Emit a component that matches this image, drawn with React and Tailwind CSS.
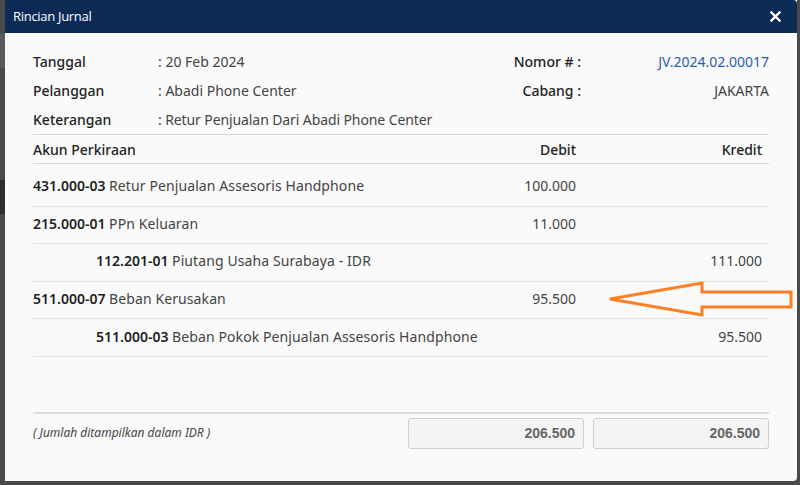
import React from "react";

const rows = [
  { code: "431.000-03", name: "Retur Penjualan Assesoris Handphone", debit: "100.000", kredit: "", indent: false, h: "h-[43px]" },
  { code: "215.000-01", name: "PPn Keluaran", debit: "11.000", kredit: "", indent: false, h: "h-[37px] pb-[4px]" },
  { code: "112.201-01", name: "Piutang Usaha Surabaya - IDR", debit: "", kredit: "111.000", indent: true, h: "h-[38px] pb-[4px]" },
  { code: "511.000-07", name: "Beban Kerusakan", debit: "95.500", kredit: "", indent: false, h: "h-[37px] pb-[4px]" },
  { code: "511.000-03", name: "Beban Pokok Penjualan Assesoris Handphone", debit: "", kredit: "95.500", indent: true, h: "h-[38px] pb-[3px]" },
];

export default function App() {
  return (
    <div className="w-[800px] h-[485px] bg-[#4a4a4a] relative overflow-hidden" style={{ fontFamily: '"Noto Sans", "Open Sans", sans-serif' }}>
      <div className="absolute left-0 top-[34px] w-[5px] h-[34px] bg-[#5a5a5a]" />
      <div className="absolute left-0 top-[180px] w-[5px] h-[34px] bg-[#2e2e2e]" />
      <div className="ml-[5px] w-[792px] h-[481px] bg-[#fafafa] rounded-br-[4px] flex flex-col relative">
        <div className="h-[33px] bg-[#0c2a56] flex items-center justify-between pl-[8px] pr-[16px] rounded-tr-[4px]">
          <span className="text-white text-[13px] tracking-[-0.3px]" style={{ fontFamily: '"Open Sans", "Noto Sans", sans-serif' }}>Rincian Jurnal</span>
          <svg width="11" height="11" viewBox="0 0 11 11">
            <path d="M1.5 1.5 L9.5 9.5 M9.5 1.5 L1.5 9.5" stroke="white" strokeWidth="2.4" strokeLinecap="square" />
          </svg>
        </div>
        <div className="px-[28px] pt-[14px] flex flex-col flex-1 text-[14px] text-[#333]">
          <div className="flex flex-col">
            <div className="flex h-[29px] items-center">
              <span className="w-[125px] font-medium text-[#222]">Tanggal</span>
              <span className="flex-1 text-[#444]">: 20 Feb 2024</span>
              <span className="font-medium text-[#222]">Nomor # :</span>
              <span className="w-[188px] text-right text-[#2b5cad]">JV.2024.02.00017</span>
            </div>
            <div className="flex h-[29px] items-center">
              <span className="w-[125px] font-medium text-[#222]">Pelanggan</span>
              <span className="flex-1 text-[#444]">: Abadi Phone Center</span>
              <span className="font-medium text-[#222]">Cabang :</span>
              <span className="w-[188px] text-right text-[#444]">JAKARTA</span>
            </div>
            <div className="flex h-[29px] items-center">
              <span className="w-[125px] font-medium text-[#222]">Keterangan</span>
              <span className="flex-1 text-[#444] tracking-[-0.1px]">: Retur Penjualan Dari Abadi Phone Center</span>
            </div>
          </div>
          <div className="border-t border-[#d6d6d6] flex h-[30px] items-center border-b font-medium text-[#222]">
            <span className="flex-1">Akun Perkiraan</span>
            <span className="w-[185px] text-right pr-[8px]">Debit</span>
            <span className="w-[185px] text-right pr-[7px]">Kredit</span>
          </div>
          {rows.map((r) => (
            <div key={r.code} className={`flex items-center border-b border-[#e4e4e4] ${r.h}`}>
              <span className={`flex-1 min-w-0 whitespace-nowrap ${r.indent ? "pl-[63px]" : ""}`}>
                <span className="font-semibold text-[#1e1e1e]">{r.code}</span>{" "}
                <span className="text-[#444] tracking-[0.1px]">{r.name}</span>
              </span>
              <span className="w-[185px] text-right pr-[8px] text-[#444]">{r.debit}</span>
              <span className="w-[185px] text-right pr-[7px] text-[#444]">{r.kredit}</span>
            </div>
          ))}
          <div className="min-h-[55px]" />
          <div className="border-t-2 border-[#dcdcdc] flex pt-[4px]">
            <span className="flex-1 italic text-[12px] text-[#444] pt-[6px]">( Jumlah ditampilkan dalam IDR )</span>
            <div className="w-[176px] h-[31px] mr-[9px] border border-[#cfcfcf] rounded-[3px] bg-[#f4f4f4] flex items-center justify-end pr-[8px] font-bold text-[#666] text-[14px]" style={{ fontFamily: '"Liberation Sans", Arial, sans-serif' }}>206.500</div>
            <div className="w-[176px] h-[31px] border border-[#cfcfcf] rounded-[3px] bg-[#f4f4f4] flex items-center justify-end pr-[8px] font-bold text-[#666] text-[14px]" style={{ fontFamily: '"Liberation Sans", Arial, sans-serif' }}>206.500</div>
          </div>
        </div>
        <svg className="absolute left-[595px] top-[278px]" width="200" height="42" viewBox="600 278 200 42">
          <path d="M610 299 L702 283 L702 292 L791 292 L791 307 L702 307 L702 315 Z" fill="none" stroke="#ff7f27" strokeWidth="3" strokeLinejoin="miter" />
        </svg>
      </div>
    </div>
  );
}
